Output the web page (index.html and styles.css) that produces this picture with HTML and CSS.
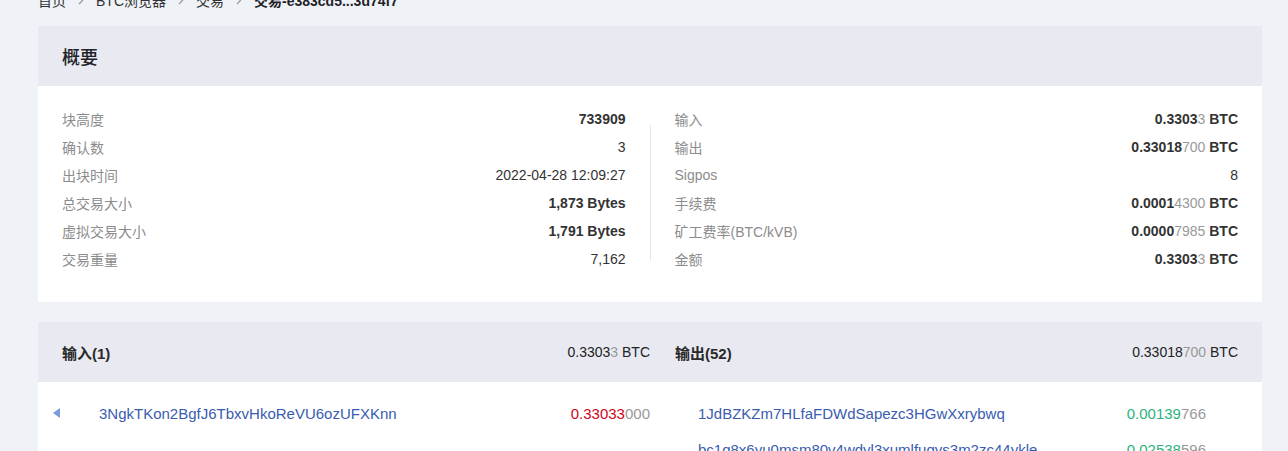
FILE: index.html
```html
<!DOCTYPE html>
<html lang="zh-CN">
<head>
  <meta charset="UTF-8">
  <meta name="viewport" content="width=device-width, initial-scale=1.0">
  <title>交易-e383cd5...3d74f7</title>
  <link rel="stylesheet" href="styles.css">
</head>
<body>
  <div class="page">
    <div class="crumbs">
      <span>首页</span>
      <svg class="sep" width="6" height="9" viewBox="0 0 6 9"><path d="M1 1l3.5 3.5L1 8" fill="none" stroke="#999" stroke-width="1.2"/></svg>
      <span>BTC浏览器</span>
      <svg class="sep" width="6" height="9" viewBox="0 0 6 9"><path d="M1 1l3.5 3.5L1 8" fill="none" stroke="#999" stroke-width="1.2"/></svg>
      <span>交易</span>
      <svg class="sep" width="6" height="9" viewBox="0 0 6 9"><path d="M1 1l3.5 3.5L1 8" fill="none" stroke="#999" stroke-width="1.2"/></svg>
      <span class="current">交易-e383cd5...3d74f7</span>
    </div>

    <div class="card">
      <div class="card-head">概要</div>
      <div class="summary">
        <div class="col">
          <div class="row"><span class="label">块高度</span><span class="val strong">733909</span></div>
          <div class="row"><span class="label">确认数</span><span class="val">3</span></div>
          <div class="row"><span class="label">出块时间</span><span class="val">2022-04-28 12:09:27</span></div>
          <div class="row"><span class="label">总交易大小</span><span class="val strong">1,873 Bytes</span></div>
          <div class="row"><span class="label">虚拟交易大小</span><span class="val strong">1,791 Bytes</span></div>
          <div class="row"><span class="label">交易重量</span><span class="val">7,162</span></div>
        </div>
        <div class="divider"></div>
        <div class="col">
          <div class="row"><span class="label">输入</span><span class="val strong">0.3303<span class="dim">3</span> BTC</span></div>
          <div class="row"><span class="label">输出</span><span class="val strong">0.33018<span class="dim">700</span> BTC</span></div>
          <div class="row"><span class="label">Sigpos</span><span class="val">8</span></div>
          <div class="row"><span class="label">手续费</span><span class="val strong">0.0001<span class="dim">4300</span> BTC</span></div>
          <div class="row"><span class="label">矿工费率(BTC/kVB)</span><span class="val strong">0.0000<span class="dim">7985</span> BTC</span></div>
          <div class="row"><span class="label">金额</span><span class="val strong">0.3303<span class="dim">3</span> BTC</span></div>
        </div>
      </div>
    </div>

    <div class="card io">
      <div class="io-side inputs">
        <div class="io-head">
          <span class="io-title">输入(1)</span>
          <span class="io-total">0.3303<span class="dim">3</span> BTC</span>
        </div>
        <div class="io-list">
          <div class="io-row">
            <svg class="io-arrow" width="7" height="10" viewBox="0 0 7 10"><path d="M7 0v10L0 5z" fill="#7b9be0"/></svg>
            <span class="addr">3NgkTKon2BgfJ6TbxvHkoReVU6ozUFXKnn</span>
            <span class="amt"><span class="out">0.33033</span><span class="dim">000</span></span>
          </div>
        </div>
      </div>
      <div class="io-side outputs">
        <div class="io-head">
          <span class="io-title">输出(52)</span>
          <span class="io-total">0.33018<span class="dim">700</span> BTC</span>
        </div>
        <div class="io-list">
          <div class="io-row">
            <span class="addr">1JdBZKZm7HLfaFDWdSapezc3HGwXxrybwq</span>
            <span class="amt"><span class="in">0.00139</span><span class="dim">766</span></span>
          </div>
          <div class="io-row">
            <span class="addr">bc1q8x6yu0msm80v4wdyl3xumlfuqys3m2zc44ykle</span>
            <span class="amt"><span class="in">0.02538</span><span class="dim">596</span></span>
          </div>
        </div>
      </div>
    </div>
  </div>
</body>
</html>
```

FILE: styles.css
```css
body {
  margin: 0;
  background-color: #eff2f7;
  font-family: "Liberation Sans", "Noto Sans CJK SC", sans-serif;
  color: #333;
}
.page {
  margin-top: -10px;
  padding: 0 26px 0 38px;
}
.crumbs {
  display: flex;
  align-items: center;
  height: 20px;
  font-size: 14px;
  color: #333;
}
.crumbs .sep {
  margin: 0 12px;
}
.crumbs .current {
  font-weight: bold;
  color: #1f2329;
}
.card {
  margin-top: 16px;
  background-color: #fff;
}
.card-head {
  height: 60px;
  display: flex;
  align-items: center;
  padding: 0 24px;
  background-color: #e8e9f1;
  font-size: 18px;
  font-weight: 500;
  color: #1f2329;
}
.summary {
  display: flex;
  padding: 19px 0 29px;
}
.summary .col {
  flex: 1;
  padding: 0 24px;
}
.divider {
  width: 1px;
  margin: 20px 0 12px;
  background-color: #e6e6e6;
}
.row {
  display: flex;
  justify-content: space-between;
  align-items: center;
  height: 28px;
}
.label {
  font-size: 14px;
  color: #8c8c8c;
}
.val {
  font-size: 14px;
  color: #333;
}
.val.strong {
  font-weight: bold;
  color: #333;
}
.dim {
  font-weight: normal;
  color: #999;
}
.card.io {
  margin-top: 20px;
  display: flex;
}
.io-side {
  flex: 1;
}
.io-head {
  height: 60px;
  display: flex;
  align-items: center;
  justify-content: space-between;
  background-color: #e8e9f1;
}
.inputs .io-head {
  padding: 0 0 0 24px;
}
.outputs .io-head {
  padding: 0 24px 0 25px;
}
.io-title {
  font-size: 15px;
  font-weight: bold;
  color: #2a2a2a;
}
.io-total {
  font-size: 14px;
  color: #222;
}
.io-list {
  padding-top: 13px;
}
.io-row {
  display: flex;
  align-items: center;
  height: 36px;
  font-size: 15px;
}
.inputs .io-row {
  padding-left: 15px;
}
.io-arrow {
  margin-right: 39px;
}
.outputs .io-row {
  padding-left: 48px;
  padding-right: 56px;
}
.addr {
  flex: 1;
  color: #3a5cb0;
}
.amt {
  color: #999;
}
.amt .out {
  color: #d0021b;
}
.amt .in {
  color: #2db37d;
}
```
